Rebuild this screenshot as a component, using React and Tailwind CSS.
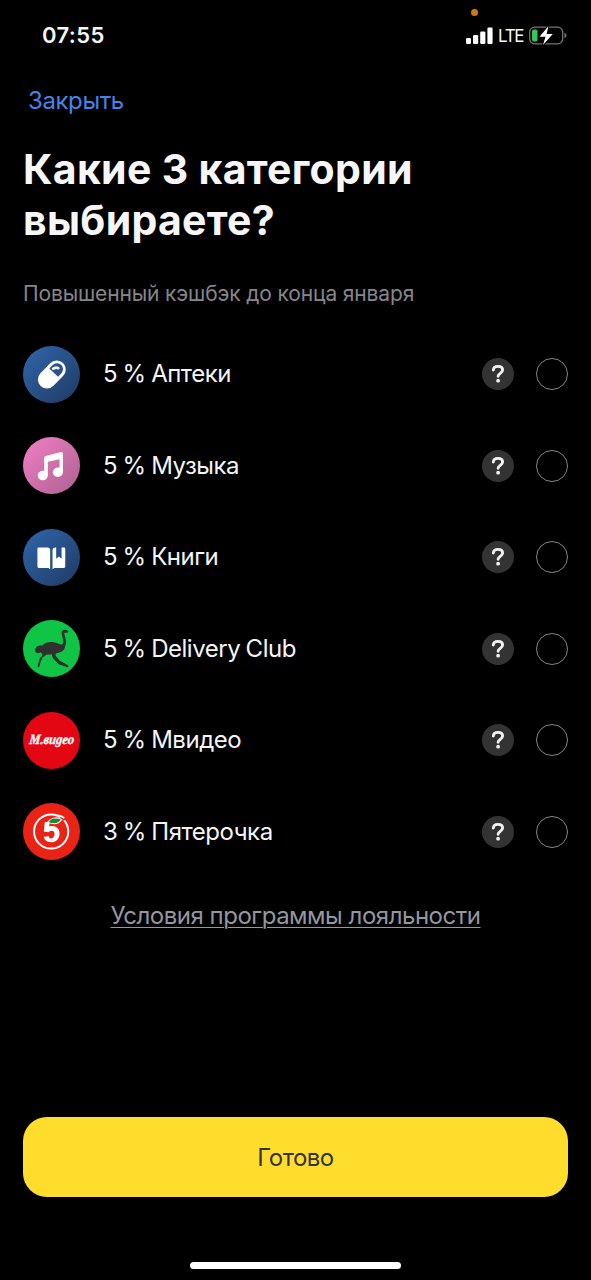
import { clsx } from 'clsx'

function PillIcon() {
  return (
    <svg viewBox="24 33 170 170" className="size-full">
      <g transform="rotate(44 110 118)">
        <rect x="83" y="70" width="54" height="96" rx="27" fill="#fff" />
        <path d="M92 110V96a18 18 0 0 1 36 0v14z" fill="#29528e" />
      </g>
      <path d="M110 99c5-6 20-7 23-1 1 4-3 6-7 4-5-2-8 3-13 2-3-1-4-3-3-5z" fill="#fff" />
    </svg>
  )
}

function MusicIcon() {
  return (
    <svg viewBox="24 30 170 170" className="size-full" fill="#fff">
      <path d="M87 93q0-5 5-6l45-12q6-1 6 5v55h-10V96l-35 8v40H87z" />
      <ellipse cx="83" cy="145" rx="15" ry="14" />
      <ellipse cx="128" cy="135" rx="15" ry="14" />
    </svg>
  )
}

function BookIcon() {
  return (
    <svg viewBox="24 27 170 170" className="size-full" fill="#fff">
      <path d="M71 82h26q7 0 8 7v58l-5-4H71q-4 0-4-4V86q0-4 4-4z" />
      <path d="M112 147V89q1-7 9-7h2v34l8-7 8 7V82h7q4 0 4 4v53q0 4-4 4h-28z" />
    </svg>
  )
}

function OstrichIcon() {
  return (
    <svg viewBox="24 27 170 170" className="size-full" fill="#30302e">
      {/* Body */}
      <path d="M61 112c3-7 10-10 21-10 8-8 22-11 34-9 10 1 16 6 24 7 6 0 10 4 9 9-2 9-10 13-19 16-9 4-17 5-25 5-9 1-17 0-22-2-4 0-5-3-6-5-5 3-10 4-14 1-3-3-4-8-2-12z" />
      {/* Neck and head */}
      <path d="M137 102c6-2 8-7 7-13-1-9-5-16-5-23 0-6 4-10 9-10 5-1 9 2 11 5l-1 3-11 2c0 6 4 13 5 22 1 12-2 20-8 23z" />
      {/* Legs */}
      <path d="M82 126h14c-3 6-7 9-13 12l-6 13-4 15c-2 3-7 2-5-3l6-22c5-4 8-8 8-15zM110 128l12-2-1 7 12 15 25 14c3 3 2 7-2 6l-26-9-17-19c-2-4-3-7-3-12z" />
    </svg>
  )
}

function MvideoIcon() {
  return (
    <svg viewBox="24 27 170 170" className="size-full">
      <g transform="translate(42 121) skewX(-6) scale(1 1.12)">
        <text
          lang="sr"
          fill="#fff"
          stroke="#fff"
          strokeWidth="1"
          textLength="133"
          lengthAdjust="spacingAndGlyphs"
          className="font-['Liberation_Serif',serif] text-[38px] font-bold italic"
        >
          М.видео
        </text>
      </g>
    </svg>
  )
}

function PyaterochkaIcon() {
  return (
    <svg viewBox="24 27 170 170" className="size-full">
      <circle cx="108" cy="112" r="51" fill="none" stroke="#fff" strokeWidth="6" />
      <path d="M132 72l14-10 8 12-9 6z" fill="#ea2317" />
      <path d="M128 64q12 2 19 8" fill="none" stroke="#fff" strokeWidth="5" />
      <path d="M89 84h15l-2 13c17-5 31 5 31 20 0 17-11 27-25 27-11 0-20-5-22-16l15-2c1 5 3 7 7 7 6 0 10-6 10-14 0-9-9-12-18-5l-14-2z" fill="#fff" />
      <path d="M98 84c8-12 24-17 41-8-8 13-22 17-41 8z" fill="#148b3a" stroke="#fff" strokeWidth="3" />
    </svg>
  )
}

const blue = 'bg-linear-to-br from-[#3066ad] to-[#1f3b63]'

const categories = [
  { title: '5 % Аптеки', icon: PillIcon, bg: blue },
  { title: '5 % Музыка', icon: MusicIcon, bg: 'bg-linear-to-br from-[#f380c5] to-[#ac6191]' },
  { title: '5 % Книги', icon: BookIcon, bg: blue },
  { title: '5 % Delivery Club', icon: OstrichIcon, bg: 'bg-[#10c445]' },
  { title: '5 % Мвидео', icon: MvideoIcon, bg: 'bg-[#e30613]' },
  { title: '3 % Пятерочка', icon: PyaterochkaIcon, bg: 'bg-[#ea2317]' },
]

function StatusBar() {
  return (
    <header className="relative flex h-[71px] items-center justify-between pr-6 pl-[42px]">
      <span className="text-[22px] font-semibold tracking-[0.4px]">07:55</span>
      {/* Microphone indicator */}
      <span className="absolute top-[9px] left-[471px] size-[7px] rounded-full bg-[#c97a12]" />
      <div className="flex items-center">
        <svg width="27" height="18" viewBox="0 0 27 18" fill="#fff">
          <rect x="0" y="11" width="5" height="6" rx="1.2" />
          <rect x="7" y="8" width="5.2" height="9" rx="1.2" />
          <rect x="14.2" y="4.5" width="5.2" height="12.5" rx="1.2" />
          <rect x="21.4" y="0.5" width="5.2" height="16.5" rx="1.2" />
        </svg>
        <span className="ml-[5px] w-[27px] pt-px text-[17px] leading-none tracking-[-1.3px]">LTE</span>
        <svg width="38" height="20" viewBox="0 0 38 20" className="ml-1">
          <rect x="0.7" y="1.2" width="33" height="16.6" rx="5" fill="none" stroke="#77777a" strokeWidth="1.3" />
          <rect x="3" y="3.5" width="5.5" height="12" rx="2" fill="#34c759" />
          <path d="M35.5 6.7a3 3 0 0 1 0 5.6z" fill="#77777a" />
          <path d="M19.5 0 10.5 10.7h6L14 19l9.8-11h-6.2z" fill="#fff" stroke="#000" strokeWidth="2" paintOrder="stroke" />
        </svg>
      </div>
    </header>
  )
}

function CategoryRow({ title, icon: Icon, bg }) {
  return (
    <li className="flex h-[57px] items-center">
      <span className={clsx('size-[57px] shrink-0 overflow-hidden rounded-full', bg)}>
        <Icon />
      </span>
      <span className="ml-[23px] flex-1 text-2xl tracking-[-0.48px] text-[#f5f5f6] [word-spacing:-0.8px]">{title}</span>
      <button className="flex size-8 items-center justify-center rounded-full bg-[#333]">
        <svg width="14" height="20" viewBox="0 0 14 20" fill="none">
          <path d="M2.3 6C2.5 3.6 4.2 2.4 6.9 2.4c2.9 0 4.7 1.4 4.7 3.6 0 3.4-4.5 3.3-4.5 6.3" stroke="#f2f2f2" strokeWidth="2.9" strokeLinecap="round" />
          <circle cx="7.1" cy="16.7" r="1.9" fill="#f2f2f2" />
        </svg>
      </button>
      <button className="ml-[22px] size-8 rounded-full border border-[#858585]" />
    </li>
  )
}

export default function App() {
  return (
    <div className="flex h-[1280px] w-[591px] flex-col bg-black font-['Inter',sans-serif] text-[#f6f6f7]">
      <StatusBar />

      <nav className="flex h-[58px] items-center pt-0.5 pl-7">
        <button className="text-2xl tracking-[-0.4px] text-[#4285ed]">Закрыть</button>
      </nav>

      <main className="flex flex-1 flex-col px-[23px]">
        <h1 className="mt-[15px] text-[41px] leading-[51px] font-bold tracking-[0.3px]">
          Какие 3 категории
          <br />
          выбираете?
        </h1>
        <p className="mt-8 text-[21px] leading-[32px] tracking-[-0.14px] text-[#85868b]">
          Повышенный кэшбэк до конца января
        </p>

        <ul className="mt-[35.7px] flex flex-col gap-[34.5px]">
          {categories.map((item) => (
            <CategoryRow key={item.title} {...item} />
          ))}
        </ul>

        <a
          href="#terms"
          className="mt-[40.3px] self-center text-2xl leading-8 tracking-[-0.48px] text-[#9496a0] underline decoration-1 underline-offset-3"
        >
          Условия программы лояльности
        </a>

        <button className="mt-auto h-20 rounded-3xl bg-[#ffdd2d] pt-0.5 text-2xl tracking-[-0.5px] text-[#333]">
          Готово
        </button>
      </main>

      <footer className="flex h-[83px] items-end justify-center pb-[11px]">
        <div className="h-[7px] w-[211px] rounded-full bg-white" />
      </footer>
    </div>
  )
}
